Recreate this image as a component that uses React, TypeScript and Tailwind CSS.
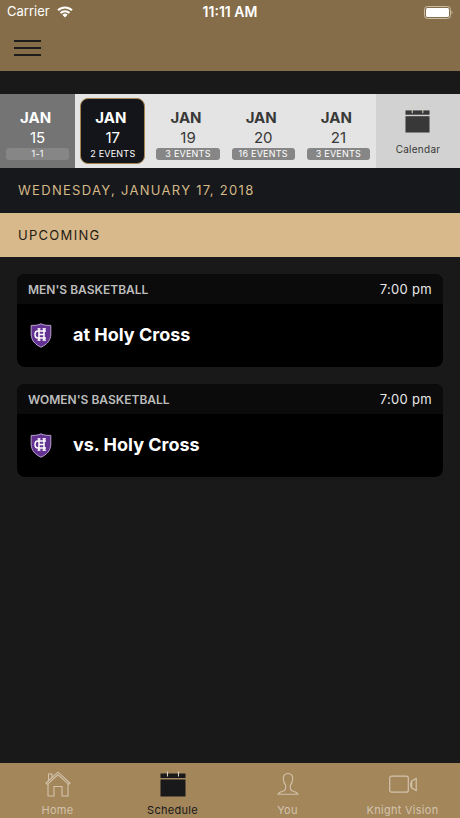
import clsx from "clsx";

const days = [
  { day: 15, note: "1-1", past: true },
  { day: 17, note: "2 EVENTS", selected: true },
  { day: 19, note: "3 EVENTS" },
  { day: 20, note: "16 EVENTS" },
  { day: 21, note: "3 EVENTS" },
];

const games = [
  { sport: "MEN'S BASKETBALL", time: "7:00 pm", opponent: "at Holy Cross" },
  { sport: "WOMEN'S BASKETBALL", time: "7:00 pm", opponent: "vs. Holy Cross" },
];

const tabs = [
  { label: "Home", Icon: HomeIcon },
  { label: "Schedule", Icon: CalendarIcon, active: true },
  { label: "You", Icon: PersonIcon },
  { label: "Knight Vision", Icon: CameraIcon },
];

function WifiIcon() {
  return (
    <svg width="16" height="12" viewBox="0 0 16 12" fill="none" aria-hidden>
      <path d="M1 4.3a10 10 0 0 1 14 0" stroke="#fff" strokeWidth="2" />
      <path d="M3.5 7a6.4 6.4 0 0 1 9 0" stroke="#fff" strokeWidth="2" />
      <path d="M5.4 8.8a3.8 3.8 0 0 1 5.2 0L8 11.5Z" fill="#fff" />
    </svg>
  );
}

function BatteryIcon() {
  return (
    <svg width="29" height="13" viewBox="0 0 29 13" aria-hidden>
      <rect x=".5" y=".5" width="26" height="12" rx="3" fill="none" stroke="#c9bda8" />
      <rect x="2" y="2" width="23" height="9" rx="1.5" fill="#fff" />
      <path d="M27.6 4.5c1.2.6 1.2 3.4 0 4Z" fill="#c9bda8" />
    </svg>
  );
}

function CalendarIcon({ size = 26 }: { size?: number }) {
  return (
    <svg width={size} height={size} viewBox="0 0 26 26" fill="currentColor" aria-hidden>
      <path d="M.5 2.5h25V7H.5Z" />
      <path d="M.5 8.500h25V25.500H.5Z" />
      <path d="M7.500 .5v5M18.500 .5v5" stroke="#d8d0c4" strokeWidth="1.100" />
    </svg>
  );
}

function HomeIcon() {
  return (
    <svg width="26" height="26" viewBox="0 0 26 26" fill="none" stroke="currentColor" strokeWidth="1.1" aria-hidden>
      <path d="M1 12 13 1.200 25 12l-1.300 1.300L13 3.800 2.300 13.300Z" />
      <path d="M3.500 9.500V3H7v3.500" />
      <path d="M3 12.700V25h6V15.500h8V25h6V12.700" />
    </svg>
  );
}

function PersonIcon() {
  return (
    <svg width="26" height="26" viewBox="0 0 26 26" fill="none" stroke="currentColor" strokeWidth="1.1" aria-hidden>
      <path d="M13 2.500c-3.500 0-5 2.500-4.700 5.800.2 2.500 1 4.500 2.400 6 .4 3-.2 4.700-1.700 5.500-2.400 1-5 .9-6 3.400h20c-1-2.500-3.600-2.400-6-3.400-1.500-.8-2.100-2.500-1.700-5.500 1.400-1.500 2.200-3.500 2.400-6 .3-3.300-1.200-5.800-4.700-5.800Z" />
    </svg>
  );
}

function CameraIcon() {
  return (
    <svg width="28" height="26" viewBox="0 0 28 26" fill="none" stroke="currentColor" strokeWidth="1.2" aria-hidden>
      <rect x=".7" y="5.200" width="18.600" height="16" rx="2" />
      <path d="M27.200 7.500v12l-4.500-2.500q-2-3.500 0-7ZM22.700 10v7" />
    </svg>
  );
}

function HolyCrossLogo() {
  return (
    <svg width="22" height="25" viewBox="0 0 22 25" fill="none" aria-hidden>
      <path
        d="M11 .8C8.500 2.200 5 2.500 1.200 2.400V11c0 6.500 4 10.500 9.800 13.200 5.800-2.700 9.800-6.700 9.800-13.200V2.400C17 2.500 13.500 2.200 11 .8Z"
        fill="#633192"
        stroke="#b9a3d0"
        strokeWidth="1"
      />
      <path d="M16 8H8Q5 8 5 11.500T8 15h8" stroke="#fff" strokeWidth="1.500" />
      <path d="M9 5.500v12M14 5.500v12M9 11.500h5" stroke="#fff" strokeWidth="1.500" />
      <path d="M7.500 5.800h3M12.500 5.800h3.500M7.500 17.200h3M12.500 17.200h3.500" stroke="#fff" strokeWidth="1.200" />
    </svg>
  );
}

function Header() {
  return (
    <header className="bg-[#866d49]">
      <div className="grid h-6 grid-cols-3 items-center px-[7px] text-[13px] text-white">
        <div className="flex items-center gap-[7px]">
          <span>Carrier</span>
          <WifiIcon />
        </div>
        <time className="text-center text-sm font-semibold">11:11 AM</time>
        <div className="flex justify-end">
          <BatteryIcon />
        </div>
      </div>
      <div className="flex h-[47px] items-center px-[14px]">
        <button type="button" aria-label="Menu" className="flex w-[27px] flex-col gap-[5px]">
          <span className="h-0.5 bg-[#1c1c1a]" />
          <span className="h-0.5 bg-[#1c1c1a]" />
          <span className="h-0.5 bg-[#1c1c1a]" />
        </button>
      </div>
    </header>
  );
}

function DayStrip() {
  return (
    <div className="mt-[23px] grid grid-cols-[repeat(5,1fr)_84px] bg-[#e4e4e4]">
      {days.map(({ day, note, past, selected }) => (
        <div key={day} className={clsx("px-[5px] py-1", past && "bg-[#747474]")}>
          <button
            type="button"
            className={clsx(
              "flex h-[66px] w-full flex-col items-center rounded-lg border pt-[9px]",
              selected ? "border-[#a5854f] bg-[#14151a]" : "border-transparent",
              past || selected ? "text-white" : "text-[#383838]",
            )}
          >
            <span className="pr-1 text-[15px] leading-5 font-bold">JAN</span>
            <span className="text-[15px] leading-5">{day}</span>
            <span
              className={clsx(
                "w-full rounded-[3px] text-[9px] leading-3 tracking-wide text-white",
                !selected && "bg-[#868686]",
              )}
            >
              {note}
            </span>
          </button>
        </div>
      ))}
      <button
        type="button"
        className="flex flex-col items-center gap-2 bg-[#d2d2d2] pt-[14px] text-[10px] leading-4 tracking-wide text-[#383838]"
      >
        <CalendarIcon size={25} />
        Calendar
      </button>
    </div>
  );
}

function GameCard({ sport, time, opponent }: (typeof games)[number]) {
  return (
    <article className="overflow-hidden rounded-lg bg-black">
      <div className="flex h-[30px] items-center justify-between bg-[#0b0b0b] px-[11px] pt-0.5">
        <h3 className="text-xs font-semibold text-[#bdbdbd]">{sport}</h3>
        <time className="text-[13px] tracking-wide text-[#e8e8e8]">{time}</time>
      </div>
      <div className="flex h-[63px] items-center gap-[21px] px-[13px]">
        <HolyCrossLogo />
        <p className="pb-0.5 text-lg font-bold text-white">{opponent}</p>
      </div>
    </article>
  );
}

function TabBar() {
  return (
    <nav className="grid h-[55px] grid-cols-4 bg-[#a3865a]">
      {tabs.map(({ label, Icon, active }) => (
        <a
          key={label}
          href="#"
          className={clsx(
            "flex flex-col items-center gap-1 pt-2 text-[11px] leading-[18px] tracking-wide",
            active ? "text-[#19191c]" : "text-[#d3c3ad]",
          )}
        >
          <Icon />
          {label}
        </a>
      ))}
    </nav>
  );
}

export default function App() {
  return (
    <div className="flex min-h-screen flex-col bg-[#191919] font-['Inter',sans-serif]">
      <Header />
      <main className="flex-1">
        <DayStrip />
        <h1 className="bg-[#17181c] px-[18px] text-[13px] leading-[45px] tracking-widest text-[#d4b988]">
          WEDNESDAY, JANUARY 17, 2018
        </h1>
        <h2 className="bg-[#d7b98b] px-[18px] text-[13px] leading-[44px] tracking-widest text-[#1f1a14]">
          UPCOMING
        </h2>
        <section className="grid gap-[17px] p-[17px]">
          {games.map((game) => (
            <GameCard key={game.sport} {...game} />
          ))}
        </section>
      </main>
      <TabBar />
    </div>
  );
}
